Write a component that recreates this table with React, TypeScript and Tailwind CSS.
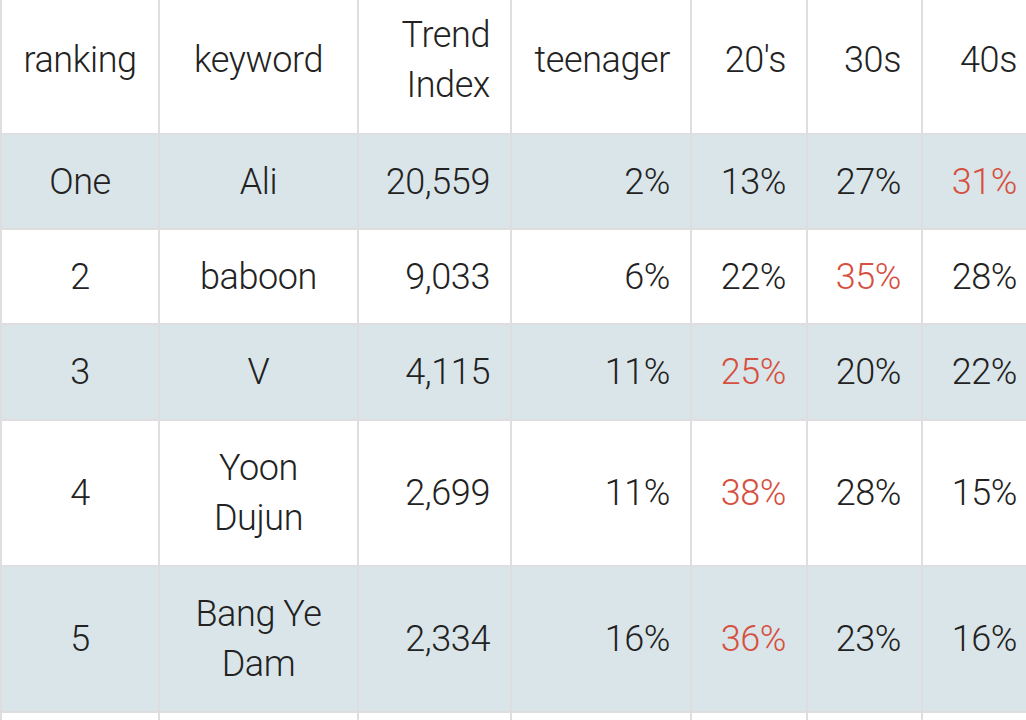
import React from "react";

type Row = {
  rank: string;
  kw: string[];
  idx: string;
  vals: { v: string; red?: boolean }[];
  h: string;
  shaded: boolean;
};

const cols = [
  "w-[158px] justify-center text-center",
  "w-[199px] justify-center text-center",
  "w-[153px] justify-end text-right pr-[20px]",
  "w-[180px] justify-end text-right pr-[20px]",
  "w-[116px] justify-end text-right pr-[20px]",
  "w-[115px] justify-end text-right pr-[20px]",
  "w-[116px] justify-end text-right pr-[20px]",
];

const rows: Row[] = [
  {
    rank: "One",
    kw: ["Ali"],
    idx: "20,559",
    vals: [{ v: "2%" }, { v: "13%" }, { v: "27%" }, { v: "31%", red: true }],
    h: "h-[95px]",
    shaded: true,
  },
  {
    rank: "2",
    kw: ["baboon"],
    idx: "9,033",
    vals: [{ v: "6%" }, { v: "22%" }, { v: "35%", red: true }, { v: "28%" }],
    h: "h-[95px]",
    shaded: false,
  },
  {
    rank: "3",
    kw: ["V"],
    idx: "4,115",
    vals: [{ v: "11%" }, { v: "25%", red: true }, { v: "20%" }, { v: "22%" }],
    h: "h-[96px]",
    shaded: true,
  },
  {
    rank: "4",
    kw: ["Yoon", "Dujun"],
    idx: "2,699",
    vals: [{ v: "11%" }, { v: "38%", red: true }, { v: "28%" }, { v: "15%" }],
    h: "h-[146px]",
    shaded: false,
  },
  {
    rank: "5",
    kw: ["Bang Ye", "Dam"],
    idx: "2,334",
    vals: [{ v: "16%" }, { v: "36%", red: true }, { v: "23%" }, { v: "16%" }],
    h: "h-[146px]",
    shaded: true,
  },
];

function Cell({
  i,
  children,
  extra = "",
}: {
  i: number;
  children: React.ReactNode;
  extra?: string;
}) {
  return (
    <div
      className={`${cols[i]} shrink-0 flex items-center border-r-2 border-[#dedede] ${extra}`}
    >
      <div>{children}</div>
    </div>
  );
}

export default function App() {
  return (
    <div
      className="w-[1026px] h-[720px] overflow-hidden bg-white text-[#222222] font-light text-[36px] leading-[50px] tracking-[-0.4px]"
      style={{ fontFamily: "Roboto, 'Noto Sans', sans-serif" }}
    >
      <div className="w-[1040px] border-l-2 border-[#dedede]">
        <div className="flex h-[135px] border-b-2 border-[#dedede] bg-white">
          <Cell i={0} extra="pb-[13px]">ranking</Cell>
          <Cell i={1} extra="pb-[13px]">keyword</Cell>
          <Cell i={2} extra="pb-[13px]">
            <div>Trend</div>
            <div>Index</div>
          </Cell>
          <Cell i={3} extra="pb-[13px]">teenager</Cell>
          <Cell i={4} extra="pb-[13px]">20's</Cell>
          <Cell i={5} extra="pb-[13px]">30s</Cell>
          <Cell i={6} extra="pb-[13px]">40s</Cell>
        </div>
        {rows.map((r) => (
          <div
            key={r.rank}
            className={`flex ${r.h} border-b-2 border-[#dedede] ${
              r.shaded ? "bg-[#dae5e9]" : "bg-white"
            }`}
          >
            <Cell i={0}>{r.rank}</Cell>
            <Cell i={1}>
              {r.kw.map((k) => (
                <div key={k}>{k}</div>
              ))}
            </Cell>
            <Cell i={2}>{r.idx}</Cell>
            {r.vals.map((v, j) => (
              <Cell key={j} i={3 + j}>
                <span className={v.red ? "text-[#d6503f]" : ""}>{v.v}</span>
              </Cell>
            ))}
          </div>
        ))}
        <div className="flex h-[95px] bg-white">
          {cols.map((_, i) => (
            <Cell key={i} i={i}>
              {""}
            </Cell>
          ))}
        </div>
      </div>
    </div>
  );
}
